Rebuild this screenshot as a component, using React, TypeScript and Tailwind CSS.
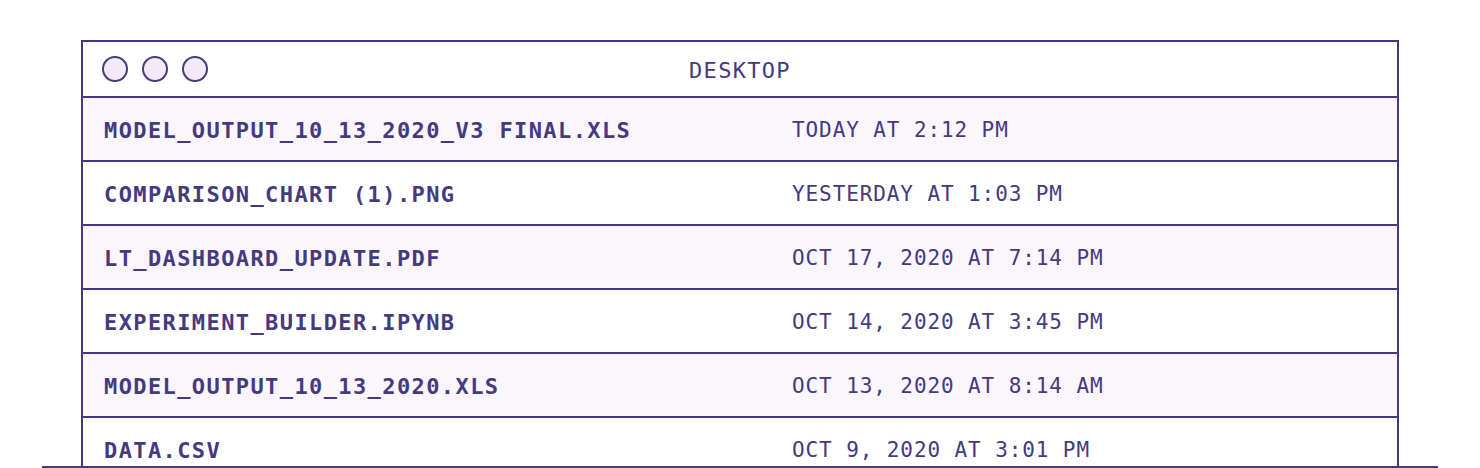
// Finder-style "Desktop" file list, cropped by a baseline rule at the bottom.

const files = [
  { name: 'MODEL_OUTPUT_10_13_2020_V3 FINAL.XLS', date: 'TODAY AT 2:12 PM' },
  { name: 'COMPARISON_CHART (1).PNG', date: 'YESTERDAY AT 1:03 PM' },
  { name: 'LT_DASHBOARD_UPDATE.PDF', date: 'OCT 17, 2020 AT 7:14 PM' },
  { name: 'EXPERIMENT_BUILDER.IPYNB', date: 'OCT 14, 2020 AT 3:45 PM' },
  { name: 'MODEL_OUTPUT_10_13_2020.XLS', date: 'OCT 13, 2020 AT 8:14 AM' },
  { name: 'DATA.CSV', date: 'OCT 9, 2020 AT 3:01 PM' },
];

const mono = "font-['DejaVu_Sans_Mono',monospace]";

function Dot() {
  return <span className="block h-[26px] w-[26px] rounded-full border-2 border-[#45397f] bg-[#f3eaf8]" />;
}

export default function App() {
  return (
    <div className="h-[468px] w-full bg-white">
      <div className="mx-[42px] h-[468px] overflow-hidden border-b-2 border-[#45397f] px-[39px] pt-[40px]">
        <div className={`border-2 border-[#45397f] text-[#45397f] ${mono}`}>
          <div className="relative flex h-[56px] items-center border-b-2 border-[#45397f] bg-white px-[19px]">
            <div className="flex gap-[14px]">
              <Dot />
              <Dot />
              <Dot />
            </div>
            <div className="absolute inset-0 flex items-center justify-center pt-[2px] text-[22px] tracking-[1.3px]">
              DESKTOP
            </div>
          </div>
          {files.map((f, i) => (
            <div
              key={f.name}
              className={`flex h-[64px] items-center border-b-2 border-[#45397f] pt-[3px] ${i % 2 === 0 ? 'bg-[#fbf6fc]' : 'bg-white'}`}
            >
              <div className="w-[709px] pl-[21px] text-[22px] font-bold tracking-[1.4px]">{f.name}</div>
              <div className="text-[21px] tracking-[0.9px]">{f.date}</div>
            </div>
          ))}
        </div>
      </div>
    </div>
  );
}
